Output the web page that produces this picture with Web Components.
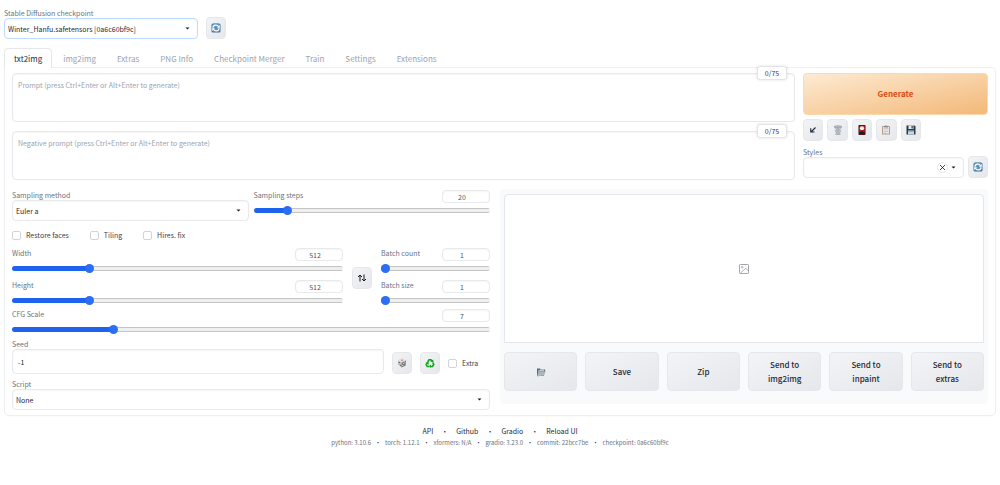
<!DOCTYPE html>
<html lang="en">
<head>
<meta charset="utf-8">
<title>Stable Diffusion</title>
<style>
body { margin: 0; background: #fff; color: #1f2937; font-family: "Noto Sans CJK SC", "Noto Sans", sans-serif; font-size: 7px; line-height: 12px; }
</style>
</head>
<body>
<sd-app></sd-app>

<template id="app-template">
  <style>
    :host { display: block; padding: 7px 4px; }
    .row { display: flex; gap: 8px; }
    .end { align-items: flex-end; }
    .checkpoint { width: 194px; --field-border: #bfdbfe; }
    .top { margin-bottom: 9px; }
    .prompts { flex: 1; display: grid; gap: 9px; }
    .actions { width: 185px; display: flex; flex-direction: column; gap: 4px; }
    .tools { display: flex; gap: 4px; width: 118px; }
    .tools sd-tool { flex: 1; }
    .styles { flex: 1; }
    .styles-row { gap: 4px; margin-top: 1px; }
    .main { margin-top: 9px; gap: 10px; align-items: flex-start; }
    .settings { flex: 1; min-width: 0; }
    .results { width: 50%; }
    .sampling { gap: 5px; }
    .sampling > * { flex: 1; }
    .checks { gap: 21px; margin: 8px 0 6px; }
    .size { gap: 9px; align-items: center; }
    .size-fields { flex: 1; }
    .batch { width: 109px; }
    .stack { display: grid; gap: 3px; }
    .seed { margin-top: 4px; }
    .seed sd-text { flex: 1; }
    .seed sd-check { width: 42px; margin-bottom: 5px; }
    .script { margin-top: 4px; }
    .swap { width: 20px; }
  </style>
  <header class="row end top">
    <sd-select class="checkpoint" value="Winter_Hanfu.safetensors [0a6c60bf9c]">Stable Diffusion checkpoint</sd-select>
    <sd-tool icon="refresh" label="Refresh checkpoints"></sd-tool>
  </header>
  <sd-tabs names="txt2img,img2img,Extras,PNG Info,Checkpoint Merger,Train,Settings,Extensions">
    <div class="row">
      <div class="prompts">
        <sd-prompt hint="Prompt (press Ctrl+Enter or Alt+Enter to generate)">0/75</sd-prompt>
        <sd-prompt hint="Negative prompt (press Ctrl+Enter or Alt+Enter to generate)">0/75</sd-prompt>
      </div>
      <div class="actions">
        <sd-button primary>Generate</sd-button>
        <div class="tools">
          <sd-tool icon="arrow" label="Read parameters"></sd-tool>
          <sd-tool icon="trash" label="Clear prompt"></sd-tool>
          <sd-tool icon="card" label="Extra networks"></sd-tool>
          <sd-tool icon="clipboard" label="Apply styles"></sd-tool>
          <sd-tool icon="disk" label="Save style"></sd-tool>
        </div>
        <div class="row end styles-row">
          <sd-select class="styles" value="" clearable>Styles</sd-select>
          <sd-tool icon="refresh" label="Refresh styles"></sd-tool>
        </div>
      </div>
    </div>
    <div class="row main">
      <div class="settings">
        <div class="row sampling">
          <sd-select value="Euler a">Sampling method</sd-select>
          <sd-range min="1" max="150" value="20">Sampling steps</sd-range>
        </div>
        <div class="row checks">
          <sd-check>Restore faces</sd-check>
          <sd-check>Tiling</sd-check>
          <sd-check>Hires. fix</sd-check>
        </div>
        <div class="row size">
          <div class="stack size-fields">
            <sd-range min="64" max="2048" value="512">Width</sd-range>
            <sd-range min="64" max="2048" value="512">Height</sd-range>
          </div>
          <sd-tool class="swap" icon="swap" label="Swap width and height"></sd-tool>
          <div class="stack batch">
            <sd-range min="1" max="100" value="1">Batch count</sd-range>
            <sd-range min="1" max="8" value="1">Batch size</sd-range>
          </div>
        </div>
        <sd-range min="1" max="30" value="7">CFG Scale</sd-range>
        <div class="row end seed">
          <sd-text value="-1">Seed</sd-text>
          <sd-tool icon="dice" label="Random seed"></sd-tool>
          <sd-tool icon="recycle" label="Reuse seed"></sd-tool>
          <sd-check>Extra</sd-check>
        </div>
        <sd-select class="script" value="None">Script</sd-select>
      </div>
      <sd-results class="results">
        <sd-button><sd-icon name="folder"></sd-icon></sd-button>
        <sd-button>Save</sd-button>
        <sd-button>Zip</sd-button>
        <sd-button>Send to img2img</sd-button>
        <sd-button>Send to inpaint</sd-button>
        <sd-button>Send to extras</sd-button>
      </sd-results>
    </div>
  </sd-tabs>
  <sd-footer></sd-footer>
</template>

<script>
const define = (name, render, ready) => customElements.define(name, class extends HTMLElement {
  connectedCallback() {
    if (this.shadowRoot) return;
    this.attachShadow({ mode: "open" }).innerHTML =
      `<style>*{box-sizing:border-box}button,input,select,textarea{font:inherit;color:inherit;margin:0}:host{display:block;box-sizing:border-box}</style>` + render(this);
    if (ready) ready(this, this.shadowRoot);
  }
});

const icons = {
  refresh: `<rect x="1" y="1" width="18" height="18" rx="3" fill="#3f7397"/><rect x="2" y="1.500" width="16" height="15.500" rx="3" fill="#5f95bb"/><path d="M4 9.500C4 3 13 2.500 15 7.500M16 10.500C16 17 7 17.500 5 12.500" fill="none" stroke="#fff" stroke-width="2.400"/><path d="M17.500 4v5.500H12zM2.500 16v-5.500H8z" fill="#fff"/>`,
  arrow: `<path d="M15 5L6 14M5.500 6.500V14H13" fill="none" stroke="#1f2937" stroke-width="2.200"/>`,
  trash: `<path d="M3 3h14l-2 16H5z" fill="#d1d5da"/><path d="M5 6l9 12M9 5l6 9M4 11l6 8M15 6L6 18M11 5l-6 9M16 11l-6 8M10 5v14" stroke="#9299a1" stroke-width=".9" fill="none"/><ellipse cx="10" cy="3.500" rx="8" ry="2" fill="#b9bec4" stroke="#858c94"/><path d="M5 19h10" stroke="#858c94"/>`,
  card: `<rect x="3" y="0" width="14" height="20" rx="1.500" fill="#211719"/><rect x="4.500" y="1.500" width="11" height="17" fill="#c51e26"/><circle cx="10" cy="6.500" r="4.200" fill="#fff1e6"/><path d="M4.500 18.500v-6q5.500-4 11 0v6z" fill="#2a1719"/><path d="M5 13q5-4 10 0" stroke="#d32b2f" stroke-width="2" fill="none"/>`,
  clipboard: `<rect x="2" y="2" width="16" height="17" rx="1" fill="#bc9c84"/><rect x="4" y="4" width="12" height="13" fill="#eff0ef"/><path d="M5 7h10M5 10h10M5 13h10M5 16h7" stroke="#a5abae" stroke-width="1"/><path d="M6 2h2q2-3 4 0h2v3H6z" fill="#858b91"/>`,
  disk: `<path d="M1 1h16l2 2v16H1z" fill="#303943"/><rect x="5" y="1" width="10" height="7" fill="#e6edf0"/><rect x="11" y="2" width="2.500" height="5" fill="#303943"/><path d="M4 11h12v8H4z" fill="#c0d9e5"/><path d="M4 12h12" stroke="#5098bc" stroke-width="2"/>`,
  swap: `<path d="M6 17V4M2 8l4-4 4 4M14 3v13M10 12l4 4 4-4" fill="none" stroke="#111827" stroke-width="2"/>`,
  dice: `<path d="M10 1l8 4-1 10-8 4-7-6V5z" fill="#bbb"/><path d="M10 1l8 4-8 4-8-4z" fill="#e7e7e7"/><path d="M18 5l-1 10-8 4 1-10z" fill="#777"/><circle cx="10" cy="4.500" r="1.500" fill="#d24c4c"/><g fill="#333"><circle cx="4.500" cy="9" r="1"/><circle cx="7.500" cy="15" r="1"/></g><g fill="#fff"><circle cx="15.500" cy="8" r="1.200"/><circle cx="13.500" cy="11" r="1.200"/><circle cx="11.500" cy="15" r="1.200"/></g>`,
  recycle: `<g fill="none" stroke="#0ca51c" stroke-width="3.200"><path d="M5.500 8L8 3.500h4l1.500 3"/><path d="M15.500 9l2 4-2.500 4h-4"/><path d="M8.500 17H4.500L2.500 13l2-3"/></g><g fill="#0ca51c"><path d="M10.500 7l6-4 .5 6z"/><path d="M12 13v7l-4-3.500z"/><path d="M1 9.500l6-2 .5 6z"/></g>`,
  folder: `<path d="M2 3h6l1 2h9v4L15 18H2z" fill="#566773"/><path d="M5 6l11-1v4L5 10z" fill="#d9e1e5"/><path d="M5 8h14l-3 9-14 2z" fill="#a9b7bf"/><path d="M5 8h14" stroke="#5f7480"/>`,
  image: `<rect x="1" y="1" width="18" height="18" rx="1.500" fill="none" stroke="#8b9097" stroke-width="1.600"/><circle cx="6.500" cy="6.500" r="1.700" fill="none" stroke="#8b9097" stroke-width="1.300"/><path d="M3 18L13.500 8.500 19 14" fill="none" stroke="#8b9097" stroke-width="1.500"/>`
};

define("sd-icon", el => `<style>:host{display:inline-block;width:10px;height:10px;vertical-align:middle}svg{display:block;width:100%;height:100%}</style>
  <svg viewBox="0 0 20 20" aria-hidden="true">${icons[el.getAttribute("name")]}</svg>`);

define("sd-tool", el => `<style>
  :host{width:20px}
  button{display:flex;align-items:center;justify-content:center;width:100%;height:22px;padding:0;border:1px solid #e5e7eb;border-radius:4px;background:linear-gradient(to bottom right,#f3f4f6,#e5e7eb)}
  </style><button type="button" aria-label="${el.getAttribute("label")}"><sd-icon name="${el.getAttribute("icon")}"></sd-icon></button>`);

define("sd-button", () => `<style>
  button{width:100%;height:39px;padding:0 18px;border:1px solid #e5e7eb;border-radius:4px;background:linear-gradient(to bottom right,#f3f4f6,#e5e7eb);color:#1f2937;font-size:8px;font-weight:500;line-height:14px}
  :host([primary]) button{height:42px;border-color:#fbd9ac;background:linear-gradient(to bottom right,#fdebd3,#f3b878);color:#dc4a14;font-weight:700}
  </style><button type="button"><slot></slot></button>`);

const labelCss = `label{display:block;height:11px;line-height:12px;color:#6b7280;white-space:nowrap}`;
const boxCss = `border:1px solid var(--field-border,#e8e9ec);border-radius:4px;background:#fff;box-shadow:inset 0 1px 2px #0000000a;`;

define("sd-select", el => `<style>${labelCss}
  .box{position:relative}
  select{display:block;appearance:none;width:100%;height:21px;padding:0 16px 0 3px;${boxCss}}
  .caret{position:absolute;right:8px;top:9px;width:5px;height:3px;pointer-events:none}
  .clear{position:absolute;right:16px;top:5px;width:11px;height:11px;padding:2px;border:1px solid #e5e7eb;border-radius:50%;background:#fff}
  .clear svg{display:block}
  </style><label for="field"><slot></slot></label><div class="box">
  <select id="field"><option>${el.getAttribute("value")}</option></select>
  ${el.hasAttribute("clearable") ? `<button class="clear" type="button" aria-label="Clear"><svg viewBox="0 0 5 5"><path d="M0 0l5 5M5 0L0 5" stroke="#111827" stroke-width=".8"/></svg></button>` : ""}
  <svg class="caret" viewBox="0 0 10 6"><path d="M1 1h8L5 5z" fill="#111827"/></svg></div>`);

define("sd-text", el => `<style>${labelCss}
  input{display:block;width:100%;height:25px;padding:0 5px;${boxCss}}
  </style><label for="field"><slot></slot></label><input id="field" type="text" value="${el.getAttribute("value")}">`);

define("sd-prompt", el => `<style>
  :host{position:relative}
  textarea{display:block;width:100%;height:49px;padding:5px;resize:none;${boxCss}}
  textarea::placeholder{color:#9ca3af}
  .count{position:absolute;right:8px;top:-7px;width:30px;height:14px;line-height:12px;text-align:center;border:1px solid #e2e4e7;border-radius:3px;background:#fff;box-shadow:0 0 3px #0000001f;color:#374151}
  </style><textarea aria-label="${el.getAttribute("hint")}" placeholder="${el.getAttribute("hint")}"></textarea><span class="count"><slot></slot></span>`);

define("sd-check", () => `<style>
  label{display:flex;align-items:center;gap:5px;color:#374151;white-space:nowrap}
  input{appearance:none;width:9px;height:9px;border:1px solid #d1d5db;border-radius:2px;background:#fff}
  input:checked{background:#2563eb}
  </style><label><input type="checkbox"><span><slot></slot></span></label>`);

define("sd-range", el => {
  const [min, max, value] = ["min", "max", "value"].map(n => el.getAttribute(n));
  return `<style>${labelCss}
  .head{display:flex;justify-content:space-between;height:14px}
  .number{width:48px;height:13px;margin-top:1px;padding:0 8px 0 0;text-align:center;appearance:textfield;color:#4b5563;${boxCss}}
  .number::-webkit-inner-spin-button{display:none}
  .range{display:block;appearance:none;width:100%;height:9px;margin:3px 0;background:none;
    --stop:calc(5px + (100% - 9px) * var(--ratio))}
  .range::-webkit-slider-runnable-track{height:5px;border-radius:3px;
    background:linear-gradient(to right,#1d63ee var(--stop),transparent var(--stop)),linear-gradient(#c4c4c4 1px,#efefef 1px,#efefef 4px,#c4c4c4 4px)}
  .range::-webkit-slider-thumb{appearance:none;width:9px;height:9px;margin-top:-2px;border-radius:50%;background:#2b6df3}
  </style>
  <div class="head"><label for="range"><slot></slot></label>
  <input class="number" type="number" aria-label="Value" min="${min}" max="${max}" value="${value}"></div>
  <input class="range" id="range" type="range" min="${min}" max="${max}" value="${value}">`;
}, (el, root) => {
  const range = root.querySelector(".range"), number = root.querySelector(".number");
  const paint = () => range.style.setProperty("--ratio", (range.value - range.min) / (range.max - range.min));
  range.oninput = () => { number.value = range.value; paint(); };
  number.oninput = () => { range.value = number.value; paint(); };
  paint();
});

define("sd-tabs", el => `<style>
  nav{display:flex;gap:1px;height:19px}
  button{height:20px;padding:0 9px;border:1px solid transparent;border-bottom:0;border-radius:4px 4px 0 0;background:none;color:#9ca3af;font-size:8px;line-height:19px;white-space:nowrap}
  button[aria-selected=true]{position:relative;border-color:#e5e7eb;background:#fff;color:#1f2937}
  section{padding:5px 7px;border:1px solid #eeeff1;border-radius:0 4px 5px 5px;box-shadow:0 1px 1px #00000005}
  </style><nav role="tablist">${el.getAttribute("names").split(",").map((n, i) => `<button type="button" role="tab" aria-selected="${i === 0}">${n}</button>`).join("")}</nav>
  <section><slot></slot></section>`);

define("sd-results", () => `<style>
  :host{padding:5px 4px 13px;border-radius:4px;background:#f9fafb}
  .gallery{display:flex;align-items:center;justify-content:center;height:149px;border:1px solid #e5e7eb;border-radius:4px 4px 0 0;background:#fff}
  .buttons{display:grid;grid-template-columns:repeat(6,1fr);gap:8px;margin-top:9px}
  </style><div class="gallery"><sd-icon name="image"></sd-icon></div><div class="buttons"><slot></slot></div>`);

define("sd-footer", () => {
  const versions = ["python: 3.10.6", "torch: 1.12.1", "xformers: N/A", "gradio: 3.23.0", "commit: 22bcc7be", "checkpoint: 0a6c60bf9c"];
  return `<style>
  :host{margin-top:9px;text-align:center}
  div{display:flex;justify-content:center}
  .links{gap:8px}
  .versions{gap:4px;font-size:6px;color:#6b7280}
  a{color:#1f2937;text-decoration:none}
  i{font-style:normal;color:#1f2937}
  </style><div class="links">${["API", "Github", "Gradio", "Reload UI"].map(n => `<a href="#">${n}</a>`).join("<i>•</i>")}</div>
  <div class="versions">${versions.map(v => `<span>${v}</span>`).join("<i>•</i>")}</div>`;
});

customElements.define("sd-app", class extends HTMLElement {
  connectedCallback() {
    this.attachShadow({ mode: "open" }).append(document.getElementById("app-template").content.cloneNode(true));
  }
});
</script>
</body>
</html>
